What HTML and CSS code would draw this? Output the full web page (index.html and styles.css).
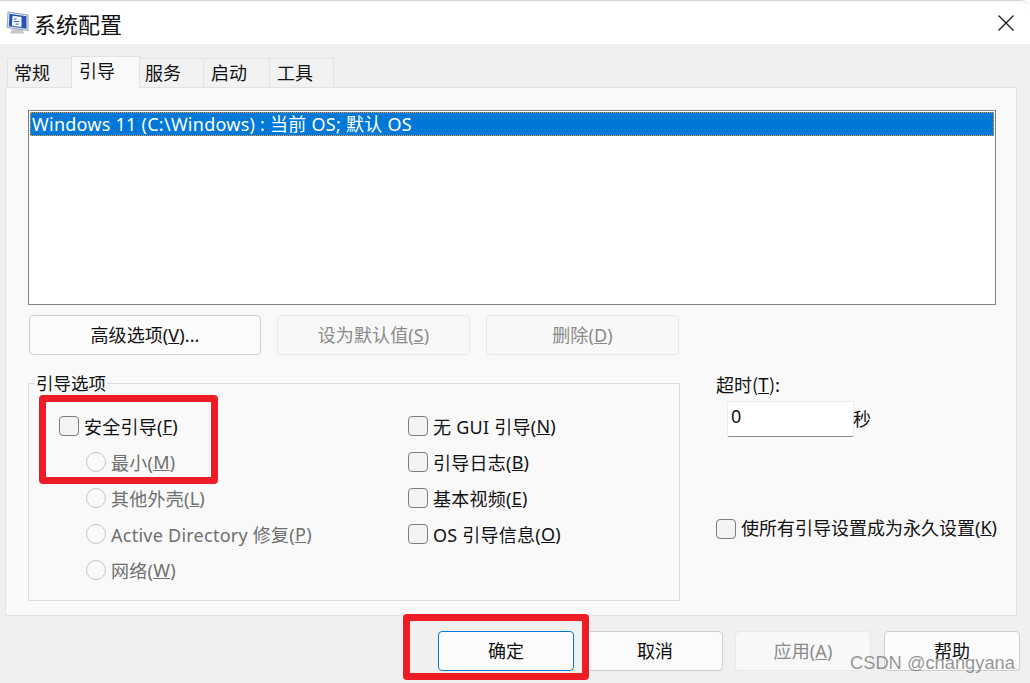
FILE: index.html
```html
<!DOCTYPE html>
<html lang="zh-CN">
<head>
<meta charset="utf-8">
<title>系统配置</title>
<link rel="stylesheet" href="styles.css">
</head>
<body>
<div class="window">
  <header class="titlebar">
    <svg class="app-icon" viewBox="0 0 24 24" width="24" height="24" aria-hidden="true">
      <path d="M7 18.500h10l2.500 4H5z" fill="#c4c6c8"/>
      <path d="M3 1 23 4v15.500L2 16.500z" fill="#e4e8ee" stroke="#7f8ba3" stroke-width=".8"/>
      <path d="M4.500 2.800 21.500 5.300v12.400L3.800 15.300z" fill="#2456b8"/>
      <path d="M7.500 4.800 16.500 6v10L7 14.700z" fill="#f4f8fc"/>
      <path d="M9 8h2.500M9 10.500h5M10.500 13l3 .3" stroke="#2a62c4" stroke-width="1.100"/>
    </svg>
    <h1 class="title">系统配置</h1>
    <svg class="close" viewBox="0 0 16 16" width="16" height="16" aria-hidden="true">
      <path d="M.5.500l15 15M15.500.500l-15 15" stroke="#1a1a1a" stroke-width="1.300" fill="none"/>
    </svg>
  </header>

  <nav class="tabs">
    <span class="tab tab-first">常规</span>
    <span class="tab tab-active">引导</span>
    <span class="tab tab-narrow">服务</span>
    <span class="tab tab-wide">启动</span>
    <span class="tab tab-last">工具</span>
  </nav>

  <main class="panel">
    <div class="listbox">
      <div class="list-row">Windows 11 (C:\Windows) : 当前 OS; 默认 OS</div>
    </div>

    <div class="list-actions">
      <button class="btn btn-list">高级选项(<u>V</u>)...</button>
      <button class="btn btn-list btn-off">设为默认值(<u>S</u>)</button>
      <button class="btn btn-list btn-off">删除(<u>D</u>)</button>
    </div>

    <div class="options">
      <fieldset class="group">
        <legend class="legend">引导选项</legend>
        <div class="group-grid">
          <div class="col">
            <label class="opt"><span class="check"></span>安全引导(<u>F</u>)</label>
            <label class="opt opt-sub off"><span class="radio"></span>最小(<u>M</u>)</label>
            <label class="opt opt-sub off"><span class="radio"></span>其他外壳(<u>L</u>)</label>
            <label class="opt opt-sub off"><span class="radio"></span>Active Directory 修复(<u>P</u>)</label>
            <label class="opt opt-sub off"><span class="radio"></span>网络(<u>W</u>)</label>
          </div>
          <div class="col">
            <label class="opt"><span class="check"></span>无 GUI 引导(<u>N</u>)</label>
            <label class="opt"><span class="check"></span>引导日志(<u>B</u>)</label>
            <label class="opt"><span class="check"></span>基本视频(<u>E</u>)</label>
            <label class="opt"><span class="check"></span>OS 引导信息(<u>O</u>)</label>
          </div>
        </div>
      </fieldset>

      <div class="side">
        <div class="timeout-label">超时(<u>T</u>):</div>
        <div class="timeout-row">
          <div class="timeout-input">0</div>
          <span class="timeout-unit">秒</span>
        </div>
        <label class="opt opt-perm"><span class="check"></span>使所有引导设置成为永久设置(<u>K</u>)</label>
      </div>
    </div>
  </main>

  <footer class="footer">
    <button class="btn btn-foot btn-default">确定</button>
    <button class="btn btn-foot">取消</button>
    <button class="btn btn-foot btn-off">应用(<u>A</u>)</button>
    <button class="btn btn-foot">帮助</button>
  </footer>

  <div class="mark mark-safe"></div>
  <div class="mark mark-ok"></div>
  <div class="watermark">CSDN @changyana</div>
</div>
</body>
</html>
```
FILE: styles.css
```css
* { box-sizing: border-box; }
html, body { margin: 0; padding: 0; background: #fff; }
body {
  font-family: "Noto Sans", "Noto Sans CJK SC", sans-serif;
  font-size: 18px;
  color: #111;
}
u { text-underline-offset: 1px; text-decoration-thickness: 1px; }

.window {
  position: relative;
  width: 1030px;
  height: 683px;
  overflow: hidden;
  background: #f0f0f0;
  border-top: 1px solid #d4d4d4;
  border-top-right-radius: 10px;
}

.titlebar {
  display: flex;
  align-items: center;
  height: 43px;
  padding: 0 16px 0 5px;
  background: #fff;
}
.app-icon { flex: none; margin-right: 5px; }
.title {
  flex: 1;
  margin: 0;
  font-family: "Noto Sans CJK SC", sans-serif;
  font-size: 22px;
  font-weight: 400;
  line-height: 1;
}
.close { flex: none; }

.tabs {
  display: flex;
  align-items: flex-end;
  height: 43px;
  padding-left: 7px;
  font-family: "Noto Sans CJK SC", sans-serif;
}
.tab {
  position: relative;
  display: block;
  width: 64px;
  height: 29px;
  padding-left: 6px;
  line-height: 26px;
  background: #f2f2f2;
  border: 1px solid #e2e2e2;
  border-bottom: none;
}
.tab-first { padding-left: 6px; border-right: none; }
.tab-narrow { padding-left: 5px; border-left: none; }
.tab-wide { width: 66px; padding-left: 7px; border-left: none; }
.tab-last { padding-left: 7px; border-left: none; }
.tab-active {
  width: 69px;
  height: 32px;
  margin-bottom: -1px;
  padding-left: 7px;
  line-height: 27px;
  background: #f9f9f9;
  z-index: 1;
}

.panel {
  width: 1012px;
  height: 529px;
  margin-left: 5px;
  padding: 22px 20px 0 22px;
  background: #f9f9f9;
  border: 1px solid #e3e3e3;
}

.listbox {
  width: 968px;
  height: 195px;
  padding: 1px;
  background: #fff;
  border: 1px solid #7f8388;
}
.list-row {
  height: 24px;
  padding-left: 2px;
  line-height: 24px;
  color: #fff;
  background: #0078d7;
  outline: 1px dotted #f09a3a;
  outline-offset: -1px;
  letter-spacing: .25px;
  white-space: nowrap;
}

.btn {
  display: block;
  padding: 0 0 2px;
  font: inherit;
  letter-spacing: .1px;
  color: #111;
  background: #fbfbfb;
  border: 1px solid #cfcfcf;
  border-radius: 4px;
}
.btn-off {
  color: #8a8a8a;
  background: #f8f8f8;
  border-color: #e8e8e8;
}
.list-actions {
  display: flex;
  gap: 16px;
  margin: 10px 0 0 1px;
}
.btn-list { width: 193px; height: 40px; }
.btn-list:first-child { width: 232px; }

.options {
  display: flex;
  margin-top: 17px;
}
.group {
  width: 652px;
  height: 229px;
  margin: 0;
  padding: 0;
  border: 1px solid #dcdcdc;
  flex: none;
}
.legend {
  margin-left: 6px;
  padding: 0 1px;
  line-height: 22px;
  font-size: 17.500px;
}
.group-grid {
  display: grid;
  grid-template-columns: 349px 1fr;
  padding: 14px 0 0 30px;
}
.col { display: flex; flex-direction: column; }

.opt {
  display: flex;
  align-items: center;
  height: 36px;
  padding-bottom: 1px;
  letter-spacing: .25px;
  white-space: nowrap;
}
.opt-sub { padding-left: 27px; }
.off { color: #6f6f6f; }

.check {
  flex: none;
  width: 20px;
  height: 20px;
  margin: 1px 5px 0 0;
  background: #f3f3f3;
  border: 1px solid #7d7d7d;
  border-radius: 4px;
}
.radio {
  flex: none;
  width: 20px;
  height: 20px;
  margin: 1px 5px 0 0;
  background: #fafafa;
  border: 1px solid #c6c6c6;
  border-radius: 50%;
}

.side {
  flex: 1;
  padding: 0 0 0 36px;
  margin-top: -1px;
}
.timeout-label { height: 26px; line-height: 26px; font-family: "Noto Sans CJK SC", sans-serif; }
.timeout-row {
  display: flex;
  margin: 4px 0 0 11px;
}
.timeout-input {
  width: 127px;
  height: 36px;
  padding-left: 3px;
  line-height: 28px;
  background: #fff;
  border: 1px solid #ececec;
  border-bottom: 1px solid #8a8a8a;
  border-radius: 2px;
}
.timeout-unit { line-height: 36px; margin-left: -1px; }
.opt-perm { margin-top: 74px; padding-bottom: 4px; letter-spacing: 0; }
.opt-perm .check { margin-top: 4px; }

.footer {
  display: flex;
  gap: 13px;
  margin: 15px 0 0 438px;
}
.btn-foot { flex: none; width: 136px; height: 40px; }
.btn-foot:nth-child(3) { margin-left: -1px; }
.btn-default { border-color: #0078d7; }

.mark {
  position: absolute;
  border: 7px solid #ee1c25;
  border-radius: 4px;
}
.mark-safe { left: 39px; top: 394px; width: 179px; height: 89px; }
.mark-ok { left: 403px; top: 613px; width: 186px; height: 66px; }
.watermark {
  position: absolute;
  left: 850px;
  top: 650px;
  font-family: "Liberation Sans", sans-serif;
  font-size: 18.300px;
  line-height: 24px;
  color: rgba(80, 80, 80, .6);
  white-space: nowrap;
}
```
